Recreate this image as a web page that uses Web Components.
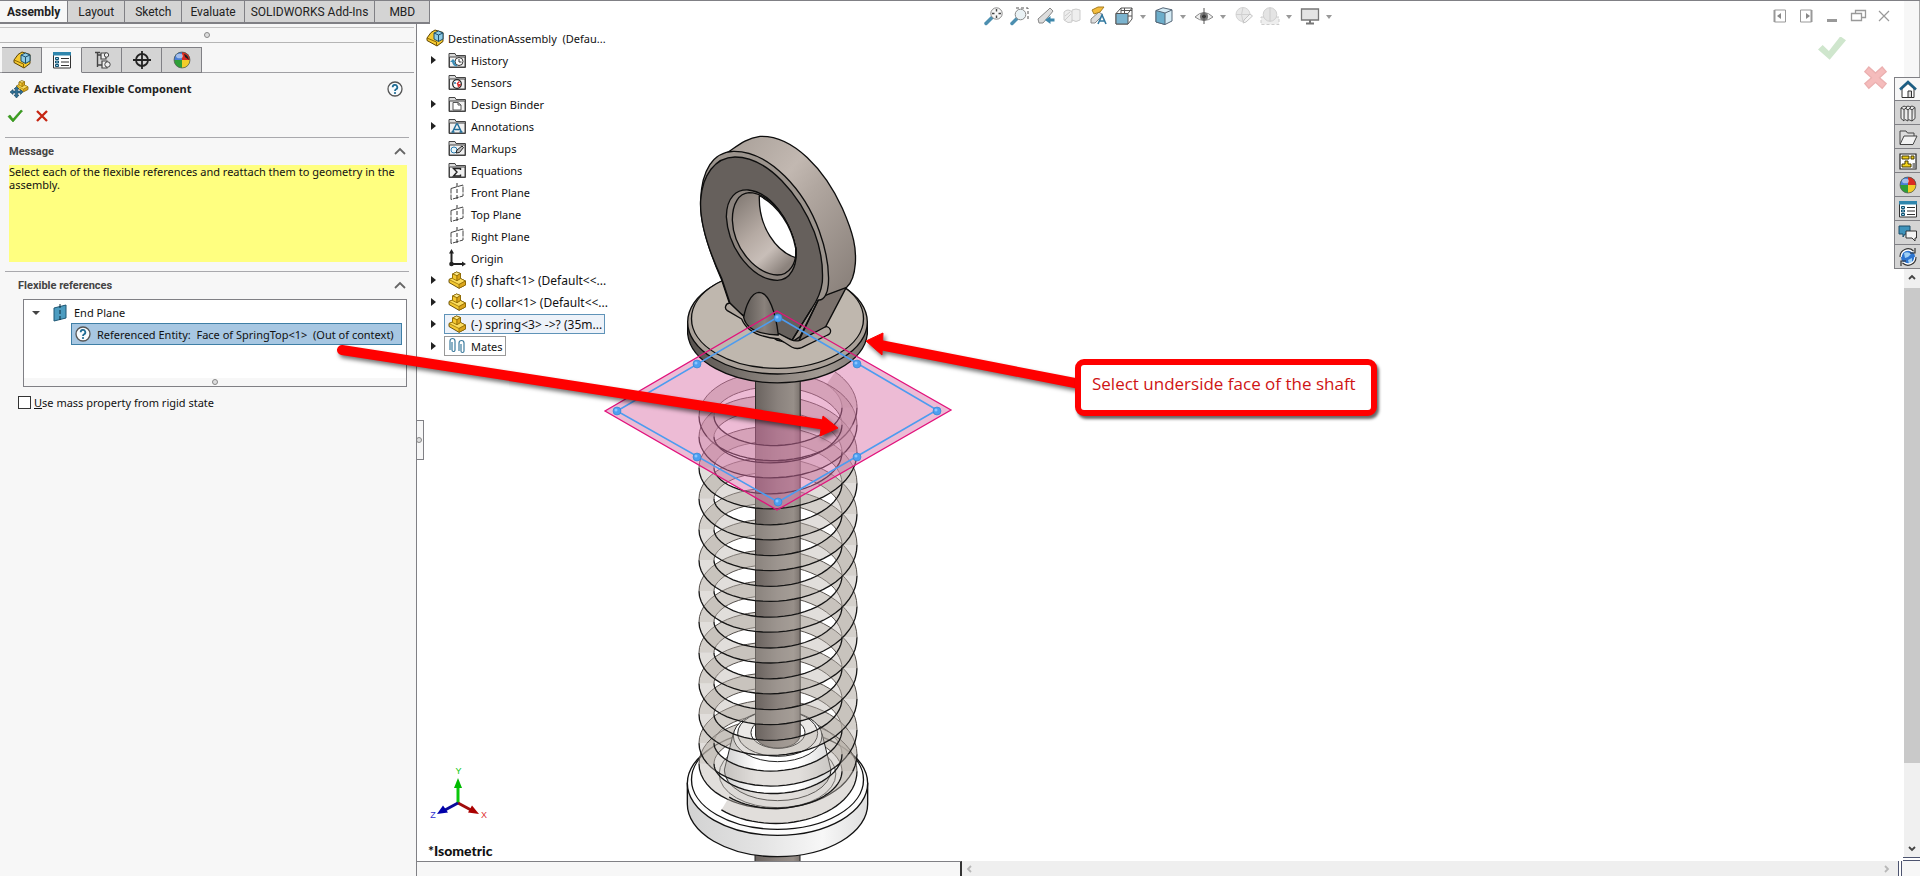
<!DOCTYPE html>
<html lang="en">
<head>
<meta charset="utf-8">
<title>SOLIDWORKS - DestinationAssembly</title>
<style>
html, body { margin: 0; height: 100%; }
body { font: 11px/13px "Noto Sans", "Open Sans", sans-serif; color: #111; background: #fff; }
</style>
</head>
<body>
<cad-app></cad-app>
<script>
const define = (name, html) => customElements.define(name, class extends HTMLElement {
  connectedCallback() {
    if (this.shadowRoot) return;
    const t = document.createElement('template');
    t.innerHTML = typeof html === 'function' ? html(this) : html;
    this.attachShadow({ mode: 'open' }).append(t.content.cloneNode(true));
  }
});

/* ---------- icons (18 x 18 grid) ---------- */
const folder = '<path d="M1 16.5V2.5h6l1 2h9.500v12z" fill="#d9d9d9" stroke="#444"/><path d="M1.500 6h15.500v10H1.500z" fill="#f1f1f1" stroke="#444"/>';
const plane = '<path d="M3 5.500 15 2v11L3 16.500z" fill="#fff" stroke="#444" stroke-dasharray="6 1"/><path d="M9 0v18" stroke="#333" stroke-dasharray="4 2"/>';
const part = '<path d="M1 8.500 4.500 7V3L8.500 1l4 1.500v5l5 2.500v4L11 17.300 1 11.500z" fill="#f5c931" stroke="#5c4300" stroke-width=".9"/><path d="M4.500 3 8.500 1l4 1.500L9 4.700z" fill="#fde98a" stroke="#8a6500" stroke-width=".7"/><path d="M9 9.500 12.500 7.500l5 2.500-6.500 3.500L1 8.500 4.500 7z" fill="#fbdc5e" stroke="#8a6500" stroke-width=".7"/><path d="M4.500 3 9 4.700v5L4.500 7.500z" fill="#f5c931" stroke="#8a6500" stroke-width=".7"/><path d="M9 4.700l3.500-2.200v5L9 9.700zM11 13.500l6.500-3.500v4L11 17.300z" fill="#dba51c" stroke="#8a6500" stroke-width=".7"/>';
const asm = '<path d="M1 9 5 3.500 9 1l8 2.500v9L11 17 1 11.500z" fill="#f5c931" stroke="#5c4300"/><path d="M1 9l9.500 4M10.500 13v4" stroke="#8a6500"/><path d="M8 4 12.500 2 17 4v6l-4.500 2.500L8 10z" fill="#8dcbe6" stroke="#1f4f6c"/><path d="M8 4l4.500 2L17 4M12.500 6v6.500" fill="none" stroke="#1f4f6c"/>';
const ball = '<circle cx="9" cy="9" r="8" fill="#2e9e37"/><path d="M9 9V1a8 8 0 0 0-8 8z" fill="#4a7fd6"/><path d="M9 9V1a8 8 0 0 1 8 8z" fill="#db2c22"/><path d="M9 9h8a8 8 0 0 1-8 8z" fill="#f2cd2a"/><circle cx="9" cy="9" r="8" fill="none" stroke="#555" stroke-width=".7"/><ellipse cx="6.500" cy="5" rx="3.500" ry="2.300" fill="#fff" opacity=".5"/>';
const list = '<path d="M.5 1.500h17v15.500H.5z" fill="#fff" stroke="#333"/><path d="M0 1h18v3.500H0z" fill="#2f86ad"/><path d="M2.500 6.500h3v2h-3zM2.500 10h3v2h-3zM2.500 13.500h3v2h-3z" fill="#8fd0ea" stroke="#14506e"/><path d="M8 7.500h8M8 11h8M8 14.500h8" stroke="#333"/>';
const help = '<circle cx="9" cy="9" r="7" fill="#f8fbfd" stroke="#555" stroke-width="1.300"/><path d="M6.700 7.200a2.300 2.300 0 1 1 3.400 2q-1.100.6-1.100 1.700" fill="none" stroke="#1d6b94" stroke-width="1.800"/><circle cx="9" cy="13" r="1.100" fill="#1d6b94"/>';
const ICONS = {
  part, asm, ball, list, help, plane,
  history: folder + '<circle cx="11" cy="10.500" r="4" fill="#fff" stroke="#333"/><path d="M11 8v3h2.500" fill="none" stroke="#333"/><path d="M2 11l3-3 3 3H6.500a4 4 0 0 0 3 3.500l-1 1Q5 15 4 11z" fill="#3b8cb5"/>',
  sensors: folder + '<circle cx="9" cy="11" r="4.300" fill="#fff" stroke="#222" stroke-width="1.300"/><path d="M9 11l2.500-2.500" stroke="#d22" stroke-width="1.500"/><path d="M9 11l4 0a4 4 0 0 1-3 3.500z" fill="#d33"/><circle cx="7" cy="10" r="1" fill="#2a7db0"/>',
  binder: folder + '<path d="M5 7.500h5l3 2.500v5H5z" fill="#fff" stroke="#555"/><path d="M10 7.500V10h3" fill="none" stroke="#555"/>',
  annot: folder + '<path d="M4.500 15 8.500 7h1l4 8M6.500 12.500h5M3.500 15h3M11.500 15h3" fill="none" stroke="#236f9b" stroke-width="1.500"/>',
  markups: folder + '<circle cx="6" cy="11" r="3" fill="#e8f6fb" stroke="#2a7db0"/><path d="M8 14l1-3 5-4 1.500 1.500-4 5z" fill="#bbb" stroke="#222"/>',
  equations: folder + '<path d="M12.500 9V7.500h-7L9 11l-3.500 4h7v-1.500" fill="none" stroke="#222" stroke-width="1.400"/>',
  origin: '<path d="M3.500 3v12H15" fill="none" stroke="#222" stroke-width="2"/><path d="M1 4.500 3.500 0 6 4.500zM14 12.500l4 2.500-4 2.500z" fill="#222"/><circle cx="3.500" cy="15" r="2.300" fill="#222"/>',
  mates: '<path d="M2 13V4a2.500 2.500 0 0 1 5 0v9a1.500 1.500 0 0 1-3 0V5M11 14V6a2.500 2.500 0 0 1 5 0v8a1.500 1.500 0 0 1-3 0V7" fill="none" stroke="#3d7c9e" stroke-width="1.200"/>',
  endplane: '<path d="M3 4 15 1v13L3 17z" fill="#4c9cc0" stroke="#1d5775"/><path d="M9 0v18" stroke="#0b2a3a" stroke-dasharray="4 2"/>',
  tree: '<path d="M4.500 1v15M4.500 4H8M4.500 14H9M2 1.500h5" fill="none" stroke="#444" stroke-width="1.400"/><path d="M8 2h5v6H8zM9 10h5v7H9z" fill="#eee" stroke="#444" stroke-width="1.200"/><circle cx="13.500" cy="4" r="2.200" fill="#eee" stroke="#444"/><circle cx="14.500" cy="13.500" r="2.700" fill="#eee" stroke="#444"/>',
  target: '<circle cx="9" cy="9" r="6" fill="none" stroke="#222" stroke-width="1.800"/><path d="M9 0v18M0 9h18" stroke="#222" stroke-width="1.800"/>',
  appearance: ball + '<path d="M11 3q4 1 5 6l-4-3z" fill="#222"/>',
  flex: '<g transform="translate(6 0) scale(.68)">' + part + '</g><path d="M6.500 6.500 9 9H7.500v2h3V9.500l2.500 2.500-2.500 2.500V13h-3v2H9l-2.500 3L4 15h1.500v-2H3v1.500L0 12l3-2.500V11h2.500V9H4z" fill="#2f6f94" stroke="#17445e" stroke-width=".6"/>',
  ok: '<path d="M2 9.500 4 8l3 4 8-9 1.500 1L7 15z" fill="#3aa21e" stroke="#2b8512" stroke-width=".6"/>',
  cancel: '<path d="M4 4l10 10M14 4 4 14" stroke="#c62512" stroke-width="2.300"/>',
  zoomfit: '<path d="M1 16.500 7 10.500" stroke="#4c8fb0" stroke-width="3.500" stroke-linecap="round"/><circle cx="11.500" cy="6.500" r="5.700" fill="#f6f6f6" stroke="#888"/><path d="M11.500 2v9M7 6.500h9" stroke="#444" stroke-width="1.400" stroke-dasharray="2.500 4"/>',
  zoomarea: '<path d="M5 1h12v12" fill="none" stroke="#555" stroke-dasharray="3 2"/><path d="M1 16.500 6 11.500" stroke="#4c8fb0" stroke-width="3.500" stroke-linecap="round"/><circle cx="9.500" cy="7.500" r="5.300" fill="#eaf2f5" stroke="#888"/>',
  prev: '<path d="M1 12 11 3l2-2 3 3-1.500 2L6 16H2z" fill="#ddd" stroke="#888"/><path d="M17.500 11.500h-4V9L8 13l5.500 4v-2.500h4z" fill="#3d87ab"/>',
  section: '<path d="M1 5q4-4 8 0V3q4-2 8 0v10q-4 3-8 0v2q-4 2-8-2z" fill="#eee" stroke="#ccc"/><path d="M2 13l6-6M2 9l5-4M9 5v9" stroke="#ccc"/>',
  dynamic: '<path d="M2 12 10 5l4 3-8 8H2z" fill="#ddd" stroke="#888"/><path d="M3 3 9 0h6l-4 5-6 2z" fill="#f4bc3c" stroke="#a77d20"/><path d="M9 17l4-9 4 9M10.500 14h5" fill="none" stroke="#3279a0" stroke-width="1.600"/>',
  orient: '<path d="M1 6.500 6 1h11v11l-4 5H1z" fill="#fff" stroke="#555"/><path d="M1 6.500h12V17H1z" fill="#7cb4cf" stroke="#555"/><path d="M13 6.500 17 1M6 1v5M6 3.500h11M13 9h4M9.500 1v5" stroke="#555"/>',
  display: '<path d="M1 3.500 8 .800l9 2V14l-7 3.500-9-2.500z" fill="#d4ebf5" stroke="#567"/><path d="M1 3.500 10 6v11.500L1 15z" fill="#6caecb" stroke="#567"/><path d="M10 6l7-3" stroke="#567"/>',
  eye: '<path d="M0 10Q9 1 18 10 9 17 0 10z" fill="#eee" stroke="#888"/><circle cx="9" cy="9.500" r="4" fill="#777"/><circle cx="9" cy="9.500" r="1.800" fill="#222"/><path d="M9 1v16" stroke="#555"/>',
  editapp: '<circle cx="8" cy="7.500" r="7" fill="#e8e8e8" stroke="#d4d4d4"/><path d="M8 .5q-3 7 0 14M1 7.500h14" stroke="#d0d0d0" fill="none"/><path d="M8 16l1-3 6-6 2.500 2-6.500 6z" fill="#f4f4f4" stroke="#c4c4c4"/>',
  scene: '<path d="M0 10h18v7.500H0z" fill="#eee" stroke="#ccc" stroke-dasharray="3 2"/><circle cx="9" cy="7.500" r="6.800" fill="#e4e4e4" stroke="#d0d0d0"/><path d="M9 .7v13.500" stroke="#ccc"/>',
  monitor: '<path d="M.5 2h17v11H.5z" fill="#e4e4e4" stroke="#777" stroke-width="1.300"/><path d="M9 13v3M5 16.500h8" stroke="#777" stroke-width="2"/>',
  dockl: '<path d="M3.500 3v12h11V3z" fill="none" stroke="#999"/><path d="M10 6v6L6 9z" fill="#888"/><path d="M3.500 3v12" stroke="#999" stroke-width="2"/>',
  dockr: '<path d="M3.500 3v12h11V3z" fill="none" stroke="#999"/><path d="M9 6v6l4-3z" fill="#888"/><path d="M14.500 3v12" stroke="#999" stroke-width="2"/>',
  min: '<path d="M4 13.500h10" stroke="#999" stroke-width="3"/>',
  restore: '<path d="M6.500 6V3.500h10v7H13M2.500 6.500h10v7h-10z" fill="none" stroke="#999" stroke-width="1.300"/>',
  close: '<path d="M4 4l10 10M14 4 4 14" stroke="#999" stroke-width="1.200"/>',
  bigok: '<path d="M0 10l3-3 4 4 7-9h1l3 2L7.500 16.500z" fill="#cfe6cd"/>',
  bigcancel: '<path d="M4 1.500 9 6l5-4.500L17 5l-5 4.500 5 4.500-3 3.500-5-4.500-5 4.500L1 14l5-4.500L1 5z" fill="#f5bcbc" stroke="#ebb0b0"/>',
  home: '<path d="M3 9v8.500h12V9L9 3.500z" fill="#fff" stroke="#333"/><path d="M9 11h3.500v6.500H9z" fill="#ddd" stroke="#333"/><path d="M1 9.500 9 2l8 7.500" fill="none" stroke="#1d5f85" stroke-width="2.500"/>',
  books: '<path d="M2 4l3 1.500V17l-3-2.500zM5 5.500 8 3.500 5 2 2 4M6.500 4.500 9 5.800V17l-3-1.500M9 5.800l3-2.300L9 2 7 3M10.500 4.600 13 5.800V17l-3.500-1.500M13 5.800l3-2.300L13 2l-2 1M16 3.500v11L13 17" fill="#eee" stroke="#333" stroke-width=".9"/>',
  open: '<path d="M1 16V3h6l1.500 2H15v3" fill="#ddd" stroke="#444"/><path d="M1 16.500 5 8h13l-4 8.500z" fill="#f2f2f2" stroke="#444"/>',
  palette: '<path d="M1 2h16v15H1z" fill="#fff" stroke="#222" stroke-width="1.200"/><path d="M3 4h7v3H3zM12 4h3v3h-3zM6 9h3v3h3v3H3v-3h3z" fill="#f3d21c" stroke="#443800"/><path d="M13.500 11h3v6h-3z" fill="#888"/>',
  forum: '<path d="M0 2h11v8H6l-2 3v-3H0z" fill="#3f93bb" stroke="#1d4f6b"/><path d="M7 7h10.500v7H16v3l-3-3H7z" fill="#f4f4f4" stroke="#333"/>',
  sync: '<circle cx="9" cy="9" r="7" fill="#2e75d0"/><path d="M5 5q4-2 7 1l-3 3-3 1zM9 12l4-2v4l-3 2z" fill="#9fd0f5"/><path d="M1.500 9A7.500 7.500 0 0 1 14 3.500M16.500 9A7.500 7.500 0 0 1 4 14.500" fill="none" stroke="#fff" stroke-width="2.500"/><path d="M1 9A8 8 0 0 1 14.500 3M17 9A8 8 0 0 1 3.500 15M16 0v5h-5M2 18v-5h5" fill="none" stroke="#333" stroke-width="1.200"/>',
  chev: '<path d="M4 11l5-5 5 5" fill="none" stroke="#666" stroke-width="1.800"/>'
};
define('ui-icon', el => `<style>:host{display:inline-block;width:18px;height:18px;flex:none;white-space:normal}svg{display:block;width:100%;height:100%;overflow:visible}</style><svg viewBox="0 0 18 18" fill="none" aria-hidden="true">${ICONS[el.getAttribute('name')]}</svg>`);

/* ---------- command tabs ---------- */
define('command-tabs', `<style>
:host{display:flex;width:max-content;position:relative;z-index:2}
button{font:12px/20px Roboto,"Noto Sans",sans-serif;height:23px;padding:0 8px;border:0;border-right:1px solid #808085;border-bottom:2px solid #808085;background:#d4d4d4;color:#222}
button[aria-selected=true]{font-weight:700;background:#f7f7f7;padding:0 7px}
.s{padding:0 10px}.w{padding:0 14px}.n{padding:0 6px}
</style><button role="tab" aria-selected="true">Assembly</button><button role="tab" class="s">Layout</button><button role="tab" class="s">Sketch</button><button role="tab">Evaluate</button><button role="tab" class="n">SOLIDWORKS Add-Ins</button><button role="tab" class="w">MBD</button>`);

/* ---------- property manager ---------- */
define('panel-group', el => `<style>
:host{display:block;margin:0 7px 0 5px;border-top:1px solid #a9a9ad}
header{display:flex;justify-content:space-between;align-items:center;height:25px;padding:1px 0 0 4px}
:host([inset]) header{padding-left:13px}
h3{margin:0;font:700 11px/16px Roboto,"Noto Sans",sans-serif;color:#444}
button{border:0;padding:0;background:none;height:18px}
</style><header><h3>${el.getAttribute('heading')}</h3><button aria-label="Collapse"><ui-icon name="chev"></ui-icon></button></header><slot></slot>`);

define('grip-dot', `<style>:host{display:block;width:4px;height:4px;border:1px solid #888;border-radius:50%;background:#ddd}</style>`);

define('property-manager', `<style>
:host{display:flex;flex-direction:column;flex:1;background:#f7f7f7}
.gap{margin:3px 2px 0 0;border-top:1px solid #c4c4c4;border-bottom:1px solid #b5b5b5;display:flex;align-items:center;justify-content:center;height:14px}
.tabs{display:flex;height:25px;margin:4px 2px 0 0;padding-left:2px;border-bottom:1px solid #a0a0a4}
.tabs button{width:40px;height:26px;padding:0;border:1px solid #808085;border-left:0;background:#d4d4d4;display:grid;place-items:center}
.tabs button[aria-selected=true]{background:#f7f7f7;border-bottom-color:#f7f7f7;border-top-color:#c8c8c8}
.title{display:flex;align-items:center;gap:6px;height:32px;padding:0 12px 0 10px}
h2{flex:1;margin:0;font:700 11px/18px "Noto Sans",sans-serif;color:#222}
.plain{border:0;padding:0;background:none;height:18px}
.act{display:flex;gap:9px;padding:2px 6px 12px}
.msg{margin:1px 2px 9px 4px;height:97px;background:#ffff80;color:#111}
.msg p{margin:0}
.box{box-sizing:border-box;margin:1px 2px 0 18px;height:88px;border:1px solid #808085;background:#fff;display:flex;flex-direction:column}
.row{display:flex;align-items:center;box-sizing:border-box;height:23px}
.r1{padding:2px 0 0 6px}
.r1 i{width:0;border:4px solid transparent;border-top:4px solid #444;border-bottom:0;margin:0 11px 0 2px}
.r1 ui-icon{margin-right:5px}
.sel{height:22px;margin:0 4px 0 47px;padding-left:2px;gap:5px;border:1px solid #3f7fa6;background:#a7c7e2;white-space:pre}
.foot{margin-top:auto;height:8px;background:#f7f7f7;display:flex;align-items:center;justify-content:center}
label{display:flex;align-items:center;gap:3px;margin:9px 0 0 13px}
input{appearance:none;margin:0;width:13px;height:13px;border:1px solid #333;background:#fff}
</style>
<div class="gap"><grip-dot></grip-dot></div>
<div class="tabs" role="tablist"><button role="tab" aria-label="FeatureManager"><ui-icon name="asm"></ui-icon></button><button role="tab" aria-selected="true" aria-label="PropertyManager"><ui-icon name="list"></ui-icon></button><button role="tab" aria-label="ConfigurationManager"><ui-icon name="tree"></ui-icon></button><button role="tab" aria-label="DimXpertManager"><ui-icon name="target"></ui-icon></button><button role="tab" aria-label="DisplayManager"><ui-icon name="appearance"></ui-icon></button></div>
<div class="title"><ui-icon name="flex"></ui-icon><h2>Activate Flexible Component</h2><button class="plain" aria-label="Help"><ui-icon name="help"></ui-icon></button></div>
<div class="act"><button class="plain" aria-label="OK"><ui-icon name="ok"></ui-icon></button><button class="plain" aria-label="Cancel"><ui-icon name="cancel"></ui-icon></button></div>
<panel-group heading="Message"><div class="msg"><p>Select each of the flexible references and reattach them to geometry in the assembly.</p></div></panel-group>
<panel-group heading="Flexible references" inset><div class="box">
<div class="row r1"><i></i><ui-icon name="endplane"></ui-icon><span>End Plane</span></div>
<div class="row sel"><ui-icon name="help"></ui-icon><span>Referenced Entity:  Face of SpringTop&lt;1&gt;  (Out of context)</span></div>
<div class="foot"><grip-dot></grip-dot></div></div>
<label><input type="checkbox"><span><u>U</u>se mass property from rigid state</span></label></panel-group>`);

/* ---------- feature tree ---------- */
define('tree-item', el => `<style>
:host{display:flex;align-items:center;height:22px}
i{width:0;margin:0 8px 0 6px;border:4px solid transparent;border-left:5px solid #222;border-right:0}
:host(:not([expand])) i{border-left-color:transparent}
:host([root]) i{display:none}
span{display:flex;align-items:center;gap:5px;box-sizing:border-box;height:20px;padding:0 2px 0 3px;border:1px solid transparent;white-space:pre}
:host([root]) span{gap:4px;padding:0}
:host([comp]) span{font-size:12px}
:host([hot]) span{background:#edf2f9;border-color:#5f93b8}
:host([boxed]) span{border-color:#999}
</style><i></i><span><ui-icon name="${el.getAttribute('icon')}"></ui-icon><slot></slot></span>`);

define('feature-tree', `<style>:host{display:block;width:max-content}</style>
<tree-item root icon="asm">DestinationAssembly  (Defau...</tree-item>
<tree-item expand icon="history">History</tree-item>
<tree-item icon="sensors">Sensors</tree-item>
<tree-item expand icon="binder">Design Binder</tree-item>
<tree-item expand icon="annot">Annotations</tree-item>
<tree-item icon="markups">Markups</tree-item>
<tree-item icon="equations">Equations</tree-item>
<tree-item icon="plane">Front Plane</tree-item>
<tree-item icon="plane">Top Plane</tree-item>
<tree-item icon="plane">Right Plane</tree-item>
<tree-item icon="origin">Origin</tree-item>
<tree-item expand comp icon="part">(f) shaft&lt;1&gt; (Default&lt;&lt;...</tree-item>
<tree-item expand comp icon="part">(-) collar&lt;1&gt; (Default&lt;&lt;...</tree-item>
<tree-item expand comp hot icon="part">(-) spring&lt;3&gt; -&gt;? (35m...</tree-item>
<tree-item expand boxed icon="mates">Mates</tree-item>`);

/* ---------- view toolbars ---------- */
define('icon-bar', el => `<style>
:host{display:flex;gap:8px;align-items:center}
button{border:0;background:none;padding:0;height:18px;display:flex;align-items:center}
i{width:0;border:3px solid transparent;border-top:4px solid #999;border-bottom:0;margin:2px 1px 0 7px}
</style>` + el.getAttribute('icons').split(' ').map(n => {
  const [name, drop] = n.split('+');
  return `<button aria-label="${name}"><ui-icon name="${name}"></ui-icon>${drop !== undefined ? '<i></i>' : ''}</button>`;
}).join(''));

/* ---------- 3D model ---------- */
function springPaths() {
  /* height of the coil centre at the front of each turn; both ends are closed */
  const knots = [412, 429, 460];
  for (let k = 0; k <= 8; k++) knots.push(491 + 30.8 * k);
  knots.push(760, 775, 781);
  const yAt = u => {
    const k = Math.max(0, Math.min(knots.length - 2, Math.floor(u)));
    return knots[k] + (knots[k + 1] - knots[k]) * (u - k);
  };
  const P = a => [778 + 71.5 * Math.cos(a), yAt((a - Math.PI / 2) / (2 * Math.PI)) + 41 * Math.sin(a)];
  const side = (a, s) => {
    const p = P(a), q = P(a + .01), r = P(a - .01);
    const dx = q[0] - r[0], dy = q[1] - r[1], l = Math.hypot(dx, dy);
    return [(p[0] - dy / l * s).toFixed(1), (p[1] + dx / l * s).toFixed(1)].join(' ');
  };
  const out = { back: '', front: '' };
  const start = -.74, end = 13 * 2 * Math.PI + 2.4;
  for (let h = -1; h <= 26; h++) {
    const a0 = Math.max(start, h * Math.PI), a1 = Math.min(end, (h + 1) * Math.PI);
    if (a1 <= a0) continue;
    const A = [], B = [];
    for (let i = 0; i <= 30; i++) {
      const a = a0 + (a1 - a0) * i / 30;
      A.push(side(a, 7.5)); B.push(side(a, -7.5));
    }
    const f = h % 2 === 0;
    out[f ? 'front' : 'back'] += `<path d="M${A.join('L')}L${[...B].reverse().join('L')}z" fill="#b8b0a9" fill-opacity="${f ? .42 : .6}"/>` +
      `<path d="M${A.join('L')}M${B.join('L')}" fill="none" stroke="${f ? '#151515' : '#55504c'}" stroke-width="${f ? 1.3 : 1}"/>`;
  }
  return out;
}
define('model-view', () => {
  const s = springPaths();
  return `<style>:host{display:block}svg{display:block;overflow:hidden}</style>
<svg width="1000" height="860" viewBox="417 1 1000 860" role="img" aria-label="Shaft, spring and collar assembly">
<defs>
<linearGradient id="rod"><stop offset="0" stop-color="#6a635f"/><stop offset=".5" stop-color="#8a827d"/><stop offset=".85" stop-color="#978f89"/><stop offset="1" stop-color="#7b736e"/></linearGradient>
<linearGradient id="rim"><stop offset="0" stop-color="#56514d"/><stop offset=".45" stop-color="#8a837d"/><stop offset=".75" stop-color="#a39b94"/><stop offset="1" stop-color="#79726d"/></linearGradient>
<linearGradient id="edge" x1="0" y1="0" x2="1" y2="1"><stop offset="0" stop-color="#a79e97"/><stop offset=".35" stop-color="#c2b8b1"/><stop offset=".5" stop-color="#b1a7a0"/><stop offset="1" stop-color="#857c76"/></linearGradient>
<linearGradient id="bore" x1="0" y1="0" x2=".7" y2="1"><stop offset="0" stop-color="#7c746e"/><stop offset=".5" stop-color="#b5aaa3"/><stop offset=".75" stop-color="#c8beb8"/><stop offset="1" stop-color="#8c837d"/></linearGradient>
<linearGradient id="col"><stop offset="0" stop-color="#d2d2d2"/><stop offset=".4" stop-color="#e3e3e3"/><stop offset=".75" stop-color="#f7f7f7"/><stop offset="1" stop-color="#dedede"/></linearGradient>
<linearGradient id="dome"><stop offset="0" stop-color="#cfcfcf"/><stop offset=".3" stop-color="#fff"/><stop offset=".7" stop-color="#fff"/><stop offset="1" stop-color="#d8d8d8"/></linearGradient>
<linearGradient id="web"><stop offset="0" stop-color="#5e5955"/><stop offset=".6" stop-color="#8a827c"/><stop offset="1" stop-color="#66605c"/></linearGradient>
</defs>
<path d="M755 845h45v20h-45z" fill="url(#rod)" stroke="#222"/>
<g transform="translate(670 680) scale(.33333)" stroke="#111" stroke-width="4" fill="none">
<path d="M52 310v62a270.500 158 0 0 0 541 0v-62z" fill="url(#col)"/>
<ellipse cx="322.500" cy="310" rx="270.500" ry="156" fill="#fbfbfb"/>
<ellipse cx="322.500" cy="299" rx="258" ry="149" fill="#fff"/>
<ellipse cx="322.500" cy="282" rx="175" ry="101" fill="#f8f8f8" stroke="#444" stroke-width="3"/>
</g>
${s.back}
<g transform="translate(670 680) scale(.33333)" stroke="#222" stroke-width="3" fill="none">
<path d="M190 160 163 270a160 92 0 0 0 320 0L456 160z" fill="url(#dome)"/>
<ellipse cx="323" cy="168" rx="133" ry="77" fill="#fff"/>
<ellipse cx="323" cy="160" rx="120" ry="69" fill="#eae8e6"/>
<ellipse cx="324" cy="158" rx="81" ry="47" fill="#fff"/>
</g>
<path d="M755.500 380v355a22.300 13 0 0 0 44.700 0V380z" fill="url(#rod)" stroke="#2d2a28"/>
${s.front}
<path d="M777 311 951 410 777 510 605 411z" fill="#d96ea5" fill-opacity=".47"/>
<path d="M755.500 380h44.700v41.500l-44.700-6z" fill="url(#rod)"/>
<path d="M755.500 380v35M800.200 380v40" stroke="#2d2a28"/>
<g transform="translate(670 120) scale(.33333)" stroke="#0d0d0d" stroke-width="4" fill="none" stroke-linejoin="round">
<path d="M53 606v36a270 156 0 0 0 539 0v-36z" fill="url(#rim)"/>
<ellipse cx="322.500" cy="606" rx="269.500" ry="156" fill="#aaa199"/>
<ellipse cx="322.500" cy="596" rx="258" ry="149" fill="#bfb7ae"/>
<path d="M440 535 530 500 466 622l-76 50-30-6z" fill="#7a716c"/>
<path d="M172 98C200 80 225 55 270 49 370 45 465 150 517 265c35 80 42 120 39 165-3 40-15 62-26 72L440 536 400 300z" fill="url(#edge)"/>
<path d="M92 240C95 150 130 96 190 94c110-2 215 120 258 240 25 70 30 120 27 160-2 25-12 48-30 46L390 650l-30 20-40-10-110-75-30-30-25-75C120 400 88 310 92 240z" fill="#9c948d"/>
<path d="M92 240C97 165 135 112 195 111c100 0 195 115 238 225 22 58 27 100 24 150-3 25-12 50-32 80L366 660l-46-15-110-65-30-30-25-75C120 400 88 310 92 240z" fill="#66605c"/>
<path d="M425 566 362 668M445 540 384 668" stroke-width="4"/>
<path d="M169 290C170 230 200 208 235 210c70 8 125 90 143 175 5 55-18 96-56 96C250 480 175 390 169 290z" fill="#8c847e"/>
<path d="M187 300c0-50 20-80 50-82 65 2 120 75 140 165 5 48-20 82-55 82-65-4-132-80-135-165z" fill="url(#bore)"/>
<path d="M268 227c55 28 97 90 109 158v28c-58-18-112-92-109-186z" fill="#fff"/>
<path d="M180 550a12 12 0 0 0-8 22l43 25c15 38 55 55 112 60l38 24q14 8 30 2l78-38a12 12 0 0 0-8-24l-75 40q-14 4-28-2l-35-18c-50-4-92-15-104-50z" fill="#b0a79f"/>
<path d="M221 592c6-34 22-74 46-75 30 0 50 60 58 128-56-2-96-16-104-53z" fill="url(#web)"/>
</g>
<g fill="none"><path d="M777 311 951 410 777 510 605 411z" stroke="#e2127c" stroke-width="1.300"/>
<path d="M778 317 937 410 778 502 617 411z" stroke="#4c9cf0" stroke-width="1.600"/></g>
<g fill="#4d9ff0" stroke="#2f7fd0" stroke-width=".6">${[[778, 318], [697, 364], [857, 364], [617, 411], [937, 411], [697, 457], [857, 457], [778, 502]].map(([x, y]) => `<circle cx="${x}" cy="${y}" r="4"/><circle cx="${x - 1}" cy="${y - 1}" r="1.500" fill="#8cc4ff" stroke="none"/>`).join('')}</g>
<g transform="translate(458 803)">
<path d="M0 0v-17" stroke="#0ac80a" stroke-width="3"/><path d="M-4-15 0-25l4 10z" fill="#0b0"/>
<path d="M0 0l13 7" stroke="#a00c0c" stroke-width="3"/><path d="M10 9.500 14 2.500 21 11z" fill="#a00"/>
<path d="M0 0l-13 7" stroke="#0a0a9a" stroke-width="3"/><path d="M-10 9.500-15 2.500-21 11z" fill="#00a"/>
</g>
<g font-family="Liberation Sans, sans-serif" font-size="9" text-anchor="middle"><text x="458.500" y="774" fill="#0ac80a">Y</text><text x="484" y="818" fill="#e03030">X</text><text x="433" y="818" fill="#3030d0">Z</text></g>
</svg>`;
});

/* ---------- viewport ---------- */
define('scroll-arrow', el => `<style>:host{display:grid;place-items:center;width:16px;height:16px}svg{display:block}</style><svg width="8" height="8" viewBox="0 0 8 8" fill="none"><path d="${{ up: 'M1 6l3-3 3 3', down: 'M1 2l3 3 3-3', left: 'M5 1 2 4l3 3', right: 'M3 1l3 3-3 3' }[el.getAttribute('dir')]}" stroke="${el.hasAttribute('dim') ? '#b8b8b8' : '#444'}" stroke-width="1.800"/></svg>`);

define('graphics-area', `<style>
:host{display:flex;flex-direction:column;position:relative;min-width:0;background:#fff}
.canvas{flex:1;position:relative;overflow:hidden;min-height:0}
model-view{position:absolute;left:0;top:0}
.bars{position:relative;display:grid;grid-template-columns:1fr auto 1fr;align-items:center;padding:6px 0 0;height:18px}
.views{margin-left:6px}
.win{justify-self:end;margin-right:1px}
.confirm{position:absolute;right:6px;top:33px;display:flex;align-items:start}
.confirm button{border:0;background:none;padding:0}
.confirm ui-icon{width:28px;height:28px}
.confirm button+button{margin:31px 0 0 17px}
.confirm button+button ui-icon{width:25px;height:24px}
feature-tree{position:relative;margin:2px 0 0 8px}
.view{position:absolute;left:11px;bottom:1px;font:900 14px/18px Lato,sans-serif;color:#111}
.bottom{display:flex;height:15px;background:#f7f7f7}
.status{width:545px;border-top:1px solid #808085;border-right:2px solid #333;box-sizing:border-box}
.scroll{flex:1;background:#efefef;display:flex;justify-content:space-between}
.handle{position:absolute;left:-1px;top:419px;width:7px;height:38px;border:1px solid #808085;border-left:0;background:#f7f7f7;display:flex;align-items:center}
</style>
<div class="canvas"><model-view></model-view>
<div class="bars"><span></span><icon-bar class="views" icons="zoomfit zoomarea prev section dynamic orient+ display+ eye+ editapp scene+ monitor+"></icon-bar><icon-bar class="win" icons="dockl dockr min restore close"></icon-bar></div>
<feature-tree></feature-tree>
<div class="confirm"><button aria-label="Accept"><ui-icon name="bigok"></ui-icon></button><button aria-label="Reject"><ui-icon name="bigcancel"></ui-icon></button></div>
<div class="view">*Isometric</div></div>
<div class="handle"><grip-dot></grip-dot></div>
<div class="bottom"><div class="status"></div><div class="scroll"><scroll-arrow dir="left" dim></scroll-arrow><scroll-arrow dir="right" dim></scroll-arrow></div></div>`);

define('task-pane', `<style>
:host{display:flex;flex-direction:column;align-items:flex-end;width:26px;background:#fff}
.top{width:16px;height:76px;background:#f7f7f7;border-right:1px solid #aaa;box-sizing:border-box}
nav{width:26px;border-top:1px solid #808085}
nav button{display:grid;place-items:center;width:26px;height:24px;padding:0;border:0;border-left:1px solid #808085;border-bottom:1px solid #808085;background:#d4d4d4}
nav button:first-child{background:#f7f7f7;height:23px}
.track{flex:1;display:flex;flex-direction:column;justify-content:space-between;width:16px;background:#f0f0f0}
.thumb{flex:1;background:#c9c9c9;margin:3px 0 78px}
.lines{width:17px;height:2px;border-top:1px solid #4d5470;border-bottom:1px solid #4d5470}
.corner{align-self:stretch;display:flex;height:15px;background:#efefef}
.corner b{width:2px;margin-left:4px;border-left:1px solid #4d5470;border-right:1px solid #4d5470;background:#fff}
.corner s{flex:1;background:#f7f7f7}
</style>
<div class="top"></div>
<nav>${['home', 'books', 'open', 'palette', 'ball', 'list', 'forum', 'sync'].map(n => `<button aria-label="${n}"><ui-icon name="${n}"></ui-icon></button>`).join('')}</nav>
<div class="track"><scroll-arrow dir="up"></scroll-arrow><div class="thumb"></div><scroll-arrow dir="down"></scroll-arrow></div>
<div class="lines"></div><div class="corner"><b></b><s></s></div>`);

/* ---------- red annotations above the whole window ---------- */
define('call-outs', `<style>
:host{position:absolute;left:0;top:0;pointer-events:none;z-index:3}
svg{display:block;filter:drop-shadow(2px 3px 2px rgba(0,0,0,.55))}
p{position:absolute;left:1075px;top:358px;margin:0;padding:10px 15px 17px 11px;border:6px solid #f00;border-radius:9px;background:#fff;box-shadow:2px 3px 3px rgba(0,0,0,.6);font:17px/18px "Open Sans",sans-serif;color:#cf1414;white-space:nowrap}
</style>
<svg width="1100" height="460" viewBox="0 0 1100 460" fill="#f00"><path d="M342 349 826 424M1080 383 880 344" stroke="#f00" stroke-width="10" stroke-linecap="round"/><path d="M823 415 838 427 820 435zM883 332 866 340 882 354z" stroke="#f00"/></svg>
<p>Select underside face of the shaft</p>`);

define('cad-app', `<style>
:host{display:grid;grid-template-columns:417px minmax(0,1fr) 26px;position:relative;box-sizing:border-box;height:100vh;border-top:1px solid #808085;overflow:hidden}
.side{display:flex;flex-direction:column;box-sizing:border-box;border-right:1px solid #808085;background:#f7f7f7;position:relative;z-index:1}
</style>
<div class="side"><command-tabs></command-tabs><property-manager></property-manager></div>
<graphics-area></graphics-area>
<task-pane></task-pane>
<call-outs></call-outs>`);
</script>
</body>
</html>
